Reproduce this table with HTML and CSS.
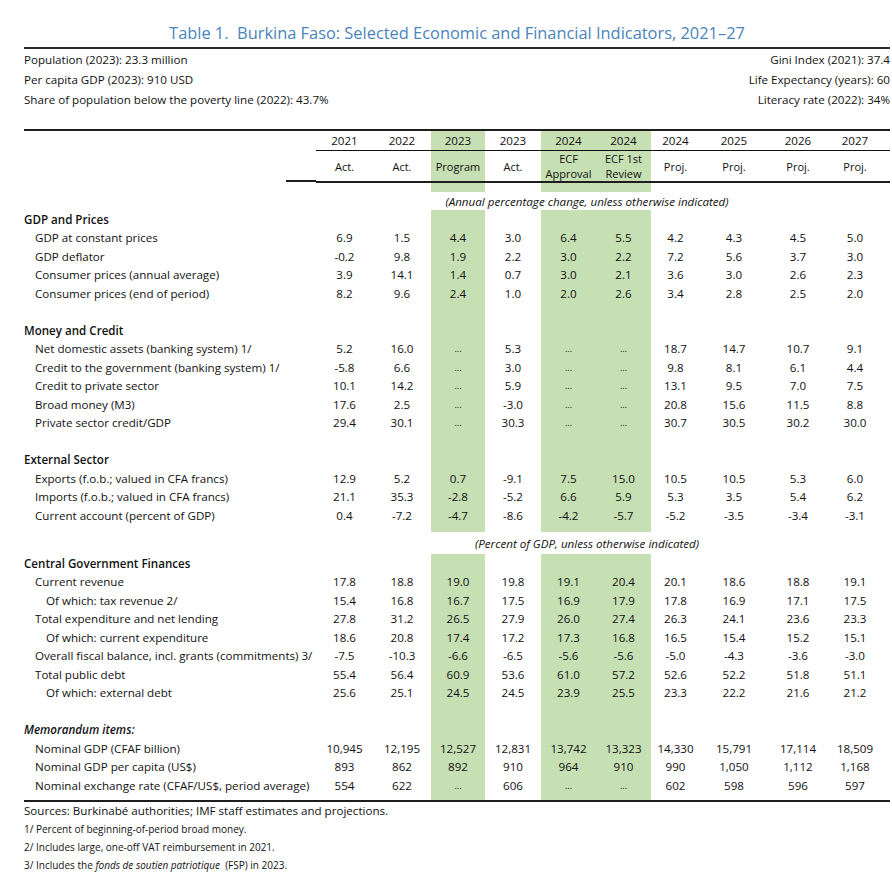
FILE: index.html
```html
<!DOCTYPE html>
<html lang="en">
<head>
<meta charset="utf-8">
<title>Burkina Faso: Selected Economic and Financial Indicators</title>
<link rel="stylesheet" href="styles.css">
</head>
<body>
<div class="page">
  <h1 class="title">Table 1.&nbsp; Burkina Faso: Selected Economic and Financial Indicators, 2021–27</h1>
  <div class="info">
    <div class="info-row"><span>Population (2023): 23.3 million</span><span>Gini Index (2021): 37.4</span></div>
    <div class="info-row"><span>Per capita GDP (2023): 910 USD</span><span>Life Expectancy (years): 60</span></div>
    <div class="info-row"><span>Share of population below the poverty line (2022): 43.7%</span><span>Literacy rate (2022): 34%</span></div>
  </div>
  <table class="ind">
    <colgroup>
      <col class="c-lab">
      <col class="c-a">
      <col class="c-b">
      <col class="c-c g">
      <col class="c-d">
      <col class="c-e g">
      <col class="c-f g">
      <col class="c-h">
      <col class="c-i">
      <col class="c-j">
      <col class="c-k">
    </colgroup>
    <thead>
      <tr class="years">
        <th class="lab"></th>
        <th>2021</th><th>2022</th><th>2023</th><th>2023</th><th>2024</th><th>2024</th><th>2024</th><th>2025</th><th>2026</th><th class="last">2027</th>
      </tr>
      <tr class="kind">
        <th class="lab"></th>
        <th>Act.</th><th>Act.</th><th>Program</th><th>Act.</th><th>ECF<br>Approval</th><th>ECF 1st<br>Review</th><th>Proj.</th><th>Proj.</th><th>Proj.</th><th class="last">Proj.</th>
      </tr>
    </thead>
    <tbody>
      <tr class="gap"><td></td><td></td><td></td><td></td><td></td><td></td><td></td><td></td><td></td><td></td><td></td></tr>
      <tr class="note"><td></td><td colspan="10">(Annual percentage change, unless otherwise indicated)</td></tr>

      <tr class="sec"><td class="lab">GDP and Prices</td><td></td><td></td><td></td><td></td><td></td><td></td><td></td><td></td><td></td><td></td></tr>
      <tr><td class="lab i1">GDP at constant prices</td><td>6.9</td><td>1.5</td><td>4.4</td><td>3.0</td><td>6.4</td><td>5.5</td><td>4.2</td><td>4.3</td><td>4.5</td><td class="last">5.0</td></tr>
      <tr><td class="lab i1">GDP deflator</td><td>-0.2</td><td>9.8</td><td>1.9</td><td>2.2</td><td>3.0</td><td>2.2</td><td>7.2</td><td>5.6</td><td>3.7</td><td class="last">3.0</td></tr>
      <tr><td class="lab i1">Consumer prices (annual average)</td><td>3.9</td><td>14.1</td><td>1.4</td><td>0.7</td><td>3.0</td><td>2.1</td><td>3.6</td><td>3.0</td><td>2.6</td><td class="last">2.3</td></tr>
      <tr><td class="lab i1">Consumer prices (end of period)</td><td>8.2</td><td>9.6</td><td>2.4</td><td>1.0</td><td>2.0</td><td>2.6</td><td>3.4</td><td>2.8</td><td>2.5</td><td class="last">2.0</td></tr>
      <tr class="blank"><td></td><td></td><td></td><td></td><td></td><td></td><td></td><td></td><td></td><td></td><td></td></tr>

      <tr class="sec"><td class="lab">Money and Credit</td><td></td><td></td><td></td><td></td><td></td><td></td><td></td><td></td><td></td><td></td></tr>
      <tr><td class="lab i1">Net domestic assets (banking system) 1/</td><td>5.2</td><td>16.0</td><td class="na">...</td><td>5.3</td><td class="na">...</td><td class="na">...</td><td>18.7</td><td>14.7</td><td>10.7</td><td class="last">9.1</td></tr>
      <tr><td class="lab i1">Credit to the government (banking system) 1/</td><td>-5.8</td><td>6.6</td><td class="na">...</td><td>3.0</td><td class="na">...</td><td class="na">...</td><td>9.8</td><td>8.1</td><td>6.1</td><td class="last">4.4</td></tr>
      <tr><td class="lab i1">Credit to private sector</td><td>10.1</td><td>14.2</td><td class="na">...</td><td>5.9</td><td class="na">...</td><td class="na">...</td><td>13.1</td><td>9.5</td><td>7.0</td><td class="last">7.5</td></tr>
      <tr><td class="lab i1">Broad money (M3)</td><td>17.6</td><td>2.5</td><td class="na">...</td><td>-3.0</td><td class="na">...</td><td class="na">...</td><td>20.8</td><td>15.6</td><td>11.5</td><td class="last">8.8</td></tr>
      <tr><td class="lab i1">Private sector credit/GDP</td><td>29.4</td><td>30.1</td><td class="na">...</td><td>30.3</td><td class="na">...</td><td class="na">...</td><td>30.7</td><td>30.5</td><td>30.2</td><td class="last">30.0</td></tr>
      <tr class="blank"><td></td><td></td><td></td><td></td><td></td><td></td><td></td><td></td><td></td><td></td><td></td></tr>

      <tr class="sec"><td class="lab">External Sector</td><td></td><td></td><td></td><td></td><td></td><td></td><td></td><td></td><td></td><td></td></tr>
      <tr><td class="lab i1">Exports (f.o.b.; valued in CFA francs)</td><td>12.9</td><td>5.2</td><td>0.7</td><td>-9.1</td><td>7.5</td><td>15.0</td><td>10.5</td><td>10.5</td><td>5.3</td><td class="last">6.0</td></tr>
      <tr><td class="lab i1">Imports (f.o.b.; valued in CFA francs)</td><td>21.1</td><td>35.3</td><td>-2.8</td><td>-5.2</td><td>6.6</td><td>5.9</td><td>5.3</td><td>3.5</td><td>5.4</td><td class="last">6.2</td></tr>
      <tr><td class="lab i1">Current account (percent of GDP)</td><td>0.4</td><td>-7.2</td><td>-4.7</td><td>-8.6</td><td>-4.2</td><td>-5.7</td><td>-5.2</td><td>-3.5</td><td>-3.4</td><td class="last">-3.1</td></tr>
      <tr class="gap2"><td></td><td></td><td></td><td></td><td></td><td></td><td></td><td></td><td></td><td></td><td></td></tr>
      <tr class="note note2"><td></td><td colspan="10">(Percent of GDP, unless otherwise indicated)</td></tr>

      <tr class="sec"><td class="lab">Central Government Finances</td><td></td><td></td><td></td><td></td><td></td><td></td><td></td><td></td><td></td><td></td></tr>
      <tr><td class="lab i1">Current revenue</td><td>17.8</td><td>18.8</td><td>19.0</td><td>19.8</td><td>19.1</td><td>20.4</td><td>20.1</td><td>18.6</td><td>18.8</td><td class="last">19.1</td></tr>
      <tr><td class="lab i2">Of which: tax revenue 2/</td><td>15.4</td><td>16.8</td><td>16.7</td><td>17.5</td><td>16.9</td><td>17.9</td><td>17.8</td><td>16.9</td><td>17.1</td><td class="last">17.5</td></tr>
      <tr><td class="lab i1">Total expenditure and net lending</td><td>27.8</td><td>31.2</td><td>26.5</td><td>27.9</td><td>26.0</td><td>27.4</td><td>26.3</td><td>24.1</td><td>23.6</td><td class="last">23.3</td></tr>
      <tr><td class="lab i2">Of which: current expenditure</td><td>18.6</td><td>20.8</td><td>17.4</td><td>17.2</td><td>17.3</td><td>16.8</td><td>16.5</td><td>15.4</td><td>15.2</td><td class="last">15.1</td></tr>
      <tr><td class="lab i1">Overall fiscal balance, incl. grants (commitments) 3/</td><td>-7.5</td><td>-10.3</td><td>-6.6</td><td>-6.5</td><td>-5.6</td><td>-5.6</td><td>-5.0</td><td>-4.3</td><td>-3.6</td><td class="last">-3.0</td></tr>
      <tr><td class="lab i1">Total public debt</td><td>55.4</td><td>56.4</td><td>60.9</td><td>53.6</td><td>61.0</td><td>57.2</td><td>52.6</td><td>52.2</td><td>51.8</td><td class="last">51.1</td></tr>
      <tr><td class="lab i2">Of which: external debt</td><td>25.6</td><td>25.1</td><td>24.5</td><td>24.5</td><td>23.9</td><td>25.5</td><td>23.3</td><td>22.2</td><td>21.6</td><td class="last">21.2</td></tr>
      <tr class="blank"><td></td><td></td><td></td><td></td><td></td><td></td><td></td><td></td><td></td><td></td><td></td></tr>

      <tr class="sec memo"><td class="lab">Memorandum items:</td><td></td><td></td><td></td><td></td><td></td><td></td><td></td><td></td><td></td><td></td></tr>
      <tr><td class="lab i1">Nominal GDP (CFAF billion)</td><td>10,945</td><td>12,195</td><td>12,527</td><td>12,831</td><td>13,742</td><td>13,323</td><td>14,330</td><td>15,791</td><td>17,114</td><td class="last">18,509</td></tr>
      <tr><td class="lab i1">Nominal GDP per capita (US$)</td><td>893</td><td>862</td><td>892</td><td>910</td><td>964</td><td>910</td><td>990</td><td>1,050</td><td>1,112</td><td class="last">1,168</td></tr>
      <tr><td class="lab i1">Nominal exchange rate (CFAF/US$, period average)</td><td>554</td><td>622</td><td class="na">...</td><td>606</td><td class="na">...</td><td class="na">...</td><td>602</td><td>598</td><td>596</td><td class="last">597</td></tr>
      <tr class="end"><td></td><td></td><td></td><td></td><td></td><td></td><td></td><td></td><td></td><td></td><td></td></tr>
    </tbody>
  </table>
  <div class="notes">
    <p class="src">Sources: Burkinabé authorities; IMF staff estimates and projections.</p>
    <p>1/ Percent of beginning-of-period broad money.</p>
    <p>2/ Includes large, one-off VAT reimbursement in 2021.</p>
    <p>3/ Includes the <i>fonds de soutien patriotique</i>&nbsp; (FSP) in 2023.</p>
  </div>
</div>
</body>
</html>
```
FILE: styles.css
```css
html, body {
  margin: 0;
  padding: 0;
  background: #fff;
}

body {
  font-family: "Open Sans", "Noto Sans", "Liberation Sans", sans-serif;
  color: #111;
}

.page {
  width: 866px;
  padding: 0 2px 0 24px;
}

.title {
  margin: 0;
  padding-top: 22px;
  height: 25px;
  line-height: 22px;
  font-size: 16.4px;
  font-weight: 400;
  color: #4a84bc;
  text-align: center;
  white-space: pre;
}

.info {
  border-top: 2px solid #2a2a2a;
  padding-top: 1px;
  margin-bottom: 19px;
}

.info-row {
  display: flex;
  justify-content: space-between;
  height: 20px;
  line-height: 20px;
  font-size: 11.6px;
}

.ind {
  width: 866px;
  table-layout: fixed;
  border-collapse: collapse;
  font-size: 11.6px;
  border-top: 2px solid #1e1e1e;
  border-bottom: 2px solid #1e1e1e;
}

.c-lab { width: 292px; }
.c-a { width: 57px; }
.c-b { width: 58px; }
.c-c { width: 54px; }
.c-d { width: 56px; }
.c-e { width: 55px; }
.c-f { width: 55px; }
.c-h { width: 49px; }
.c-i { width: 68px; }
.c-j { width: 60px; }
.c-k { width: 62px; }

col.g { background: #c6e0b4; }

.ind th,
.ind td {
  padding: 0;
  text-align: center;
  font-weight: 400;
  white-space: nowrap;
  line-height: 15px;
}

.ind .last { padding-right: 8px; }

.years th {
  height: 19px;
  vertical-align: middle;
  border-bottom: 1px solid #111;
}

.years th.lab { border-bottom: 0; }

.kind th {
  height: 30px;
  border-bottom: 2px solid #1e1e1e;
  font-size: 11px;
}

.kind th.lab {
  border-bottom: 0;
  background: linear-gradient(#1e1e1e, #1e1e1e) right bottom / 30px 2px no-repeat;
}

.note td[colspan] {
  background: #fff;
  font-style: italic;
  padding-right: 32px;
}

.ind tbody tr td { height: 18.5px; }
.ind tbody tr.gap td { height: 9px; }
.ind tbody tr.gap2 td { height: 7.5px; }
.ind tbody tr.note td { height: 18px; }
.ind tbody tr.note2 td { height: 22px; }
.ind tbody tr.end td { height: 5px; }

.ind td.lab {
  text-align: left;
}

.sec td.lab { font-weight: 600; }
.memo td.lab { font-style: italic; }

.ind td.i1 { padding-left: 11px; }
.ind td.i2 { padding-left: 22px; }

.na {
  font-size: 9px;
}

.notes p {
  margin: 0;
  height: 18px;
  line-height: 18px;
  font-size: 10px;
}

.notes p.src {
  font-size: 11.6px;
}
```
